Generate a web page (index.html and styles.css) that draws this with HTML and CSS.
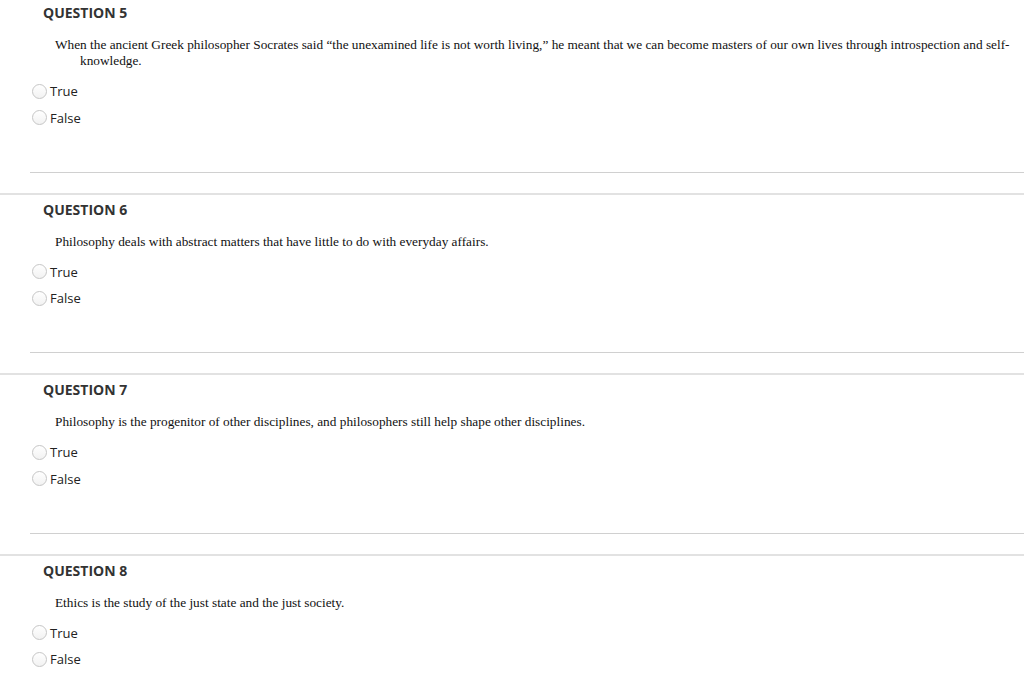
FILE: index.html
```html
<!DOCTYPE html>
<html>
<head>
<meta charset="utf-8">
<link rel="stylesheet" href="styles.css">
</head>
<body>
<div class="quiz">
  <section class="question first">
    <h3 class="q-head">QUESTION 5</h3>
    <p class="q-text">When the ancient Greek philosopher Socrates said “the unexamined life is not worth living,” he meant that we can become masters of our own lives through introspection and self-knowledge.</p>
    <ul class="options">
      <li class="option"><span class="radio"></span><span class="label">True</span></li>
      <li class="option"><span class="radio"></span><span class="label">False</span></li>
    </ul>
    <div class="sep"></div>
  </section>
  <section class="question">
    <h3 class="q-head">QUESTION 6</h3>
    <p class="q-text">Philosophy deals with abstract matters that have little to do with everyday affairs.</p>
    <ul class="options">
      <li class="option"><span class="radio"></span><span class="label">True</span></li>
      <li class="option"><span class="radio"></span><span class="label">False</span></li>
    </ul>
    <div class="sep"></div>
  </section>
  <section class="question">
    <h3 class="q-head">QUESTION 7</h3>
    <p class="q-text">Philosophy is the progenitor of other disciplines, and philosophers still help shape other disciplines.</p>
    <ul class="options">
      <li class="option"><span class="radio"></span><span class="label">True</span></li>
      <li class="option"><span class="radio"></span><span class="label">False</span></li>
    </ul>
    <div class="sep"></div>
  </section>
  <section class="question">
    <h3 class="q-head">QUESTION 8</h3>
    <p class="q-text">Ethics is the study of the just state and the just society.</p>
    <ul class="options">
      <li class="option"><span class="radio"></span><span class="label">True</span></li>
      <li class="option"><span class="radio"></span><span class="label">False</span></li>
    </ul>
    <div class="sep"></div>
  </section>
</div>
</body>
</html>
```
FILE: styles.css
```css
html, body {
  margin: 0;
  padding: 0;
  background: #ffffff;
}
body {
  font-family: "Open Sans", "Liberation Sans", sans-serif;
  color: #333333;
  overflow: hidden;
}
.question {
  border-top: 2px solid #e2e2e2;
  padding-top: 5px;
}
.question.first {
  border-top: none;
  padding-top: 3px;
}
.q-head {
  margin: 0;
  padding-left: 43px;
  font-size: 14px;
  font-weight: 700;
  line-height: 20px;
  color: #333333;
}
.q-text {
  margin: 14px 0 0 0;
  padding: 0 10px 0 80px;
  text-indent: -25px;
  font-family: "Liberation Serif", "Times New Roman", serif;
  font-size: 13.3px;
  line-height: 16px;
  color: #111111;
}
.options {
  list-style: none;
  margin: 9px 0 0 0;
  padding: 0 0 0 32px;
}
.option {
  display: flex;
  align-items: center;
  height: 26px;
}
.option + .option {
  margin-top: 0.5px;
}
.radio {
  width: 13px;
  height: 13px;
  border: 1px solid #c6c6c6;
  border-radius: 50%;
  background: linear-gradient(#ffffff, #f2f2f2);
  box-sizing: content-box;
  flex: none;
}
.label {
  margin-left: 3px;
  font-size: 13px;
  color: #222222;
}
.sep {
  margin: 41px 0 20px 30px;
  border-top: 1px solid #d0d0d0;
}
```
